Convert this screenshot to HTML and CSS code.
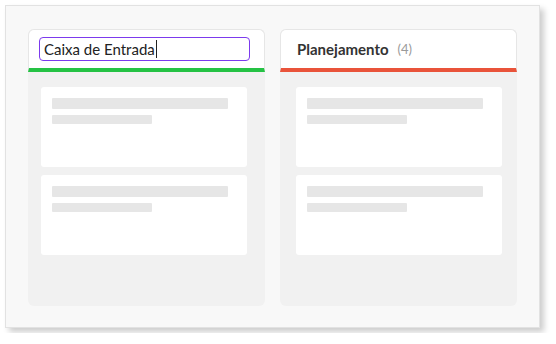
FILE: index.html
```html
<!DOCTYPE html>
<html lang="pt-BR">
	<head>
		<meta charset="UTF-8" />
		<meta name="viewport" content="width=device-width, initial-scale=1.0" />
		<title>Quadro</title>
		<link rel="stylesheet" href="styles.css">
	</head>
	<body>
		<div class="board">
			<div class="column column-inbox">
				<div class="column-header">
					<div class="title-input" contenteditable="true">Caixa de Entrada<span class="caret"></span></div>
				</div>
				<div class="column-body">
					<div class="card">
						<div class="line line-long"></div>
						<div class="line line-short"></div>
					</div>
					<div class="card">
						<div class="line line-long"></div>
						<div class="line line-short"></div>
					</div>
				</div>
			</div>

			<div class="column column-planning">
				<div class="column-header">
					<span class="column-title">Planejamento</span>
					<span class="column-count">(4)</span>
				</div>
				<div class="column-body">
					<div class="card">
						<div class="line line-long"></div>
						<div class="line line-short"></div>
					</div>
					<div class="card">
						<div class="line line-long"></div>
						<div class="line line-short"></div>
					</div>
				</div>
			</div>
		</div>
	</body>
</html>
```

FILE: styles.css
```css
body {
	margin: 0;
	padding: 5px;
	font-family: Lato, "Open Sans", sans-serif;
	background-color: #fff;
}
.board {
	box-sizing: border-box;
	width: 535px;
	height: 323px;
	padding: 23px 22px;
	display: flex;
	gap: 15px;
	background-color: #f8f8f8;
	border: 1px solid #e2e2e2;
	box-shadow: 4px 4px 6px rgba(0, 0, 0, 0.2);
}
.column {
	width: 237px;
	height: 277px;
	display: flex;
	flex-direction: column;
	background-color: #f1f1f1;
	border-radius: 6px;
}
.column-header {
	box-sizing: border-box;
	height: 43px;
	padding: 7px 14px 7px 10px;
	display: flex;
	align-items: center;
	background-color: #fff;
	border: 1px solid #e6e6e6;
	border-radius: 6px 6px 0 0;
}
.column-inbox .column-header {
	border-bottom: 4px solid #25c244;
}
.column-planning .column-header {
	border-bottom: 4px solid #e9533a;
	padding-left: 16px;
}
.title-input {
	box-sizing: border-box;
	width: 212px;
	height: 24px;
	padding: 0 4px;
	display: flex;
	align-items: center;
	font-size: 15px;
	color: #222;
	border: 1px solid #7c3aed;
	border-radius: 4px;
	outline: none;
	caret-color: transparent;
}
.caret {
	width: 1px;
	height: 18px;
	margin-left: 1px;
	background-color: #222;
}
.column-title {
	font-size: 15px;
	font-weight: 700;
	color: #333;
}
.column-count {
	margin-left: 9px;
	font-size: 13px;
	color: #9a9a9a;
}
.column-body {
	padding: 15px 18px 0 13px;
	display: flex;
	flex-direction: column;
	gap: 8px;
}
.column-planning .column-body {
	padding: 15px 15px 0 16px;
}
.card {
	box-sizing: border-box;
	height: 80px;
	padding: 11px;
	background-color: #fff;
	border-radius: 3px;
}
.line {
	background-color: #e6e6e6;
	border-radius: 1px;
}
.line-long {
	width: 176px;
	height: 11px;
	margin-bottom: 6px;
}
.line-short {
	width: 100px;
	height: 9px;
}
```
